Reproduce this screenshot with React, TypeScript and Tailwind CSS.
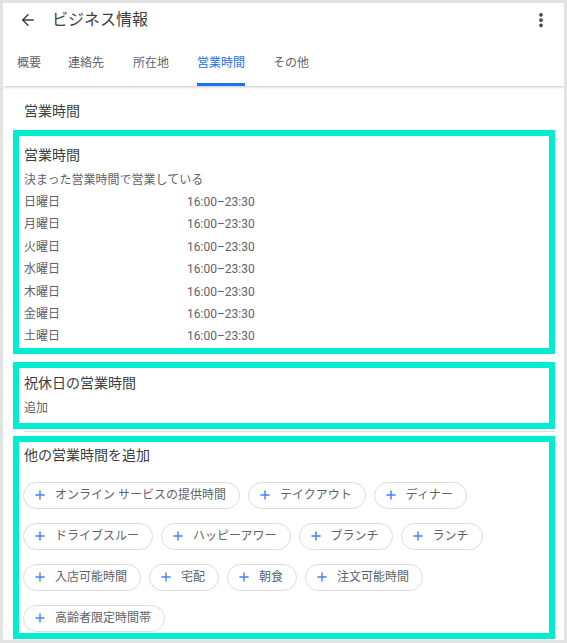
import { ArrowLeft, EllipsisVertical, Plus } from "lucide-react";

const tabs = [
  { label: "概要", ml: "ml-[14px]" },
  { label: "連絡先", ml: "ml-[27px]" },
  { label: "所在地", ml: "ml-[29px]" },
  { label: "営業時間", ml: "ml-[28px]" },
  { label: "その他", ml: "ml-[28px]" },
];
const days = ["日曜日", "月曜日", "火曜日", "水曜日", "木曜日", "金曜日", "土曜日"];
const chipRows = [
  ["オンライン サービスの提供時間", "テイクアウト", "ディナー"],
  ["ドライブスルー", "ハッピーアワー", "ブランチ", "ランチ"],
  ["入店可能時間", "宅配", "朝食", "注文可能時間"],
  ["高齢者限定時間帯"],
];

const Chip = ({ label }: { label: string }) => (
  <div className="flex h-[27px] items-center gap-[8px] rounded-full border border-[#dadce0] pl-[9px] pr-[13px] text-[12px] text-[#5f6368]">
    <Plus size={14} strokeWidth={2.5} className="text-[#4285f4]" />
    <span>{label}</span>
  </div>
);

export default function App() {
  return (
    <div className="flex h-[643px] w-[567px] flex-col overflow-hidden border-[3px] border-[#e3e3e3] bg-white font-[Roboto,'Noto_Sans_CJK_JP',sans-serif] text-[#5f6368]">
      <header className="relative z-10 shrink-0 shadow-[0_1px_3px_rgba(60,64,67,0.3)]">
        <div className="flex h-[34px] items-center pl-[16px] pr-[14px]">
          <ArrowLeft size={18} strokeWidth={2} className="text-[#3c4043]" />
          <h1 className="ml-[15px] text-[16px] text-[#3c4043]">ビジネス情報</h1>
          <EllipsisVertical size={18} strokeWidth={3} className="ml-auto text-[#3c4043]" />
        </div>
        <nav className="flex h-[49px]">
          {tabs.map((t) => (
            <div
              key={t.label}
              className={
                t.label === "営業時間"
                  ? `${t.ml} flex items-center border-b-[3px] border-[#1a73e8] pt-[6px] text-[12px] text-[#1a73e8]`
                  : `${t.ml} flex items-center border-b-[3px] border-transparent pt-[6px] text-[12px] text-[#5f6368]`
              }
            >
              {t.label}
            </div>
          ))}
        </nav>
      </header>

      <main className="flex-1 pl-[10px] pr-[9px]">
        <h2 className="mt-[15px] ml-[11px] text-[14px] leading-[20px] text-[#3c4043]">営業時間</h2>

        <section className="mt-[9px] border-[6px] border-[#00edd0] pl-[5px] pt-[9px]">
          <h3 className="text-[14px] leading-[20px] text-[#3c4043]">営業時間</h3>
          <p className="mt-[4px] text-[12px] leading-[22px]">決まった営業時間で営業している</p>
          <div className="grid grid-cols-[163px_1fr] text-[12px] leading-[22.4px]">
            {days.map((d) => (
              <div key={d} className="contents">
                <span>{d}</span>
                <span>16:00–23:30</span>
              </div>
            ))}
          </div>
        </section>

        <section className="mt-[8px] border-[6px] border-[#00edd0] pl-[5px] pt-[5px] pb-[4px]">
          <h3 className="text-[14px] leading-[20px] text-[#3c4043]">祝休日の営業時間</h3>
          <p className="mt-[4px] text-[12px] leading-[22px]">追加</p>
        </section>

        <div className="mt-[2px] ml-[11px] h-px bg-[#dadce0]" />

        <section className="mt-[4px] border-[6px] border-[#00edd0] pl-[4px] pt-[3px] pb-[1px]">
          <h3 className="ml-[1px] text-[14px] leading-[20px] text-[#3c4043]">他の営業時間を追加</h3>
          <div className="mt-[17px] flex flex-col gap-[14px]">
            {chipRows.map((row, i) => (
              <div key={i} className="flex gap-[8px]">
                {row.map((c) => (
                  <Chip key={c} label={c} />
                ))}
              </div>
            ))}
          </div>
        </section>
      </main>
    </div>
  );
}
